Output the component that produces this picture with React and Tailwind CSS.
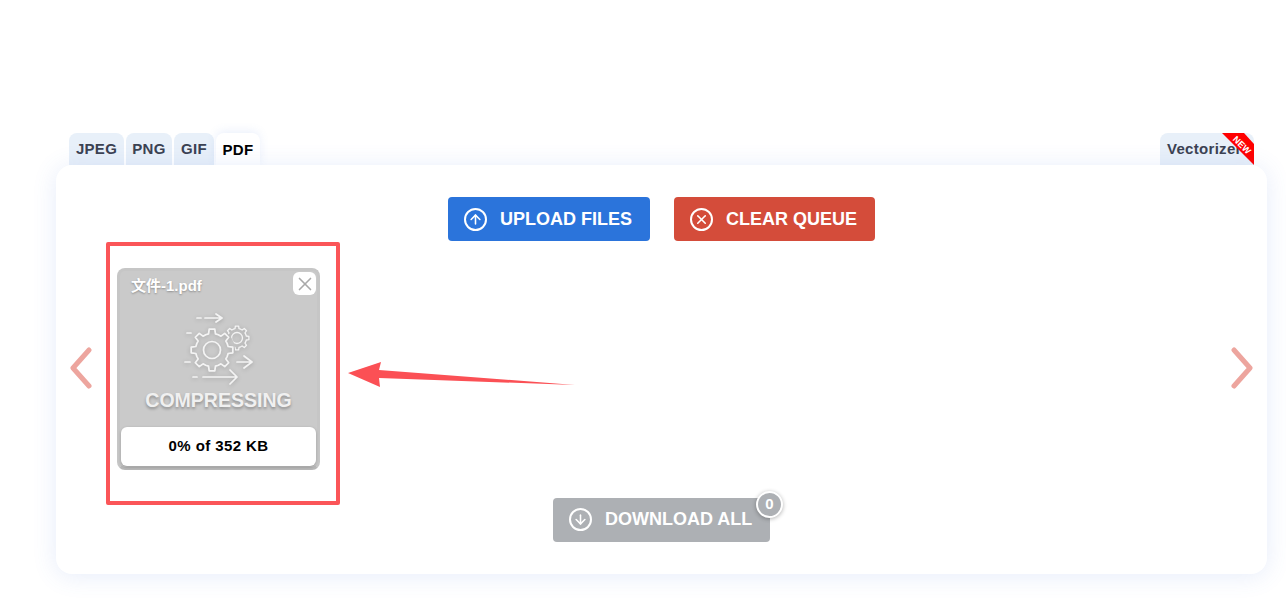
import { ArrowDown, ArrowUp, X } from 'lucide-react';

const font = { fontFamily: '"Liberation Sans", "Noto Sans CJK SC", Arial, sans-serif' };

const tabs = [
  { label: 'JPEG', width: 'w-[55px]' },
  { label: 'PNG', width: 'w-[46px]' },
  { label: 'GIF', width: 'w-[40px]' }
];

function gearPath(cx, cy, outer, inner, teeth) {
  const step = (Math.PI * 2) / teeth;
  const points = [];
  for (let i = 0; i < teeth; i += 1) {
    const a = i * step - Math.PI / 2;
    [
      [a - step * 0.5, inner],
      [a - step * 0.27, inner],
      [a - step * 0.17, outer],
      [a + step * 0.17, outer],
      [a + step * 0.27, inner]
    ].forEach(([angle, r]) => {
      points.push(`${(cx + Math.cos(angle) * r).toFixed(2)} ${(cy + Math.sin(angle) * r).toFixed(2)}`);
    });
  }
  return `M${points.join('L')}Z`;
}

function GearIcon() {
  return (
    <svg width="70" height="74" viewBox="0 0 70 74" fill="none" stroke="#f4f4f4" strokeWidth="1.7" strokeLinecap="round" strokeLinejoin="round" className="drop-shadow-[0_1px_2px_rgba(0,0,0,0.2)]">
      <defs>
        <clipPath id="behind-main-gear">
          <path clipRule="evenodd" d="M0 0H70V74H0Z M5 37a23 23 0 1 0 46 0a23 23 0 1 0 -46 0Z" />
        </clipPath>
      </defs>
      <path d={gearPath(28, 37, 21, 16.5, 8)} />
      <circle cx="28" cy="37" r="8.5" />
      <g clipPath="url(#behind-main-gear)">
        <path d={gearPath(53, 25, 12, 9.5, 8)} strokeWidth="1.3" />
        <circle cx="53" cy="25" r="5.5" strokeWidth="1.3" />
      </g>
      <path d="M13 5 h4 M21 5 h16 M32 1 L38 5 L32 9" />
      <path d="M3 20 h4" />
      <path d="M1 49 h5 M53 49 h14 M60 43 L68 49 L60 55" />
      <path d="M9 64 h4 M19 64 h34 M46 57 L53 64 L46 71" />
    </svg>
  );
}

function Chevron({ flip = false }) {
  return (
    <svg width="24" height="42" viewBox="0 0 24 42" fill="none" stroke="#eda59e" strokeWidth="5" strokeLinecap="round" strokeLinejoin="round" className={flip ? 'mt-[79px] shrink-0 -scale-x-100' : 'mt-[79px] shrink-0'}>
      <path d="M19 3 L3 21 L19 39" />
    </svg>
  );
}

export default function App() {
  return (
    <div className="relative h-[614px] w-[1286px] overflow-hidden bg-white pl-[56px] pt-[133px]" style={font}>
      <div className="flex h-[32px] w-[1211px] justify-between pl-[13px] pr-[13px]">
        <div className="flex gap-[2px]">
          {tabs.map((tab) => (
            <div key={tab.label} className={`${tab.width} flex h-[32px] items-center justify-center rounded-t-lg bg-[#e8f0f9] pt-[1px] text-[15px] font-bold tracking-[0.3px] text-[#3b4252]`}>
              {tab.label}
            </div>
          ))}
          <div className="flex h-[33px] w-[44px] items-center justify-center rounded-t-lg bg-white pt-[1px] text-[15px] font-bold tracking-[0.3px] text-black shadow-[0_-2px_10px_rgba(90,130,220,0.12)]">
            PDF
          </div>
        </div>
        <div className="relative flex h-[32px] w-[94px] items-center overflow-hidden rounded-t-lg bg-[#e8f0f9] pl-[7px] pt-[1px] text-[15px] font-bold tracking-[0.3px] text-[#3b4252]">
          Vectorizer
          <svg width="94" height="32" viewBox="0 0 94 32" className="absolute left-0 top-0">
            <path d="M62 0 H84 L94 11 V32 Z" fill="#ff0000" />
          </svg>
          <span className="absolute left-[71px] top-[8px] rotate-45 text-[9px] font-bold leading-[9px] tracking-normal text-white">NEW</span>
        </div>
      </div>

      <div className="relative z-10 flex h-[409px] w-[1211px] flex-col items-center rounded-2xl bg-white pt-[32px] shadow-[0_2px_24px_rgba(80,120,220,0.14)]">
        <div className="flex gap-[24px]">
          <button className="flex h-[44px] w-[202px] items-center gap-[13px] rounded bg-[#2b74db] pl-[16px] text-[18px] font-bold text-white">
            <span className="flex h-[23px] w-[23px] items-center justify-center rounded-full border-2 border-white">
              <ArrowUp className="h-[15px] w-[15px]" strokeWidth={2.5} />
            </span>
            UPLOAD FILES
          </button>
          <button className="flex h-[44px] w-[201px] items-center gap-[13px] rounded bg-[#d44c3a] pl-[16px] text-[18px] font-bold text-white">
            <span className="flex h-[23px] w-[23px] items-center justify-center rounded-full border-2 border-white">
              <X className="h-[15px] w-[15px]" strokeWidth={2.5} />
            </span>
            CLEAR QUEUE
          </button>
        </div>

        <div className="flex h-[230px] w-full items-start pl-[14px] pr-[14px] pt-[27px]">
          <Chevron />
          <div className="relative ml-[23px] flex h-[202px] w-[203px] shrink-0 flex-col items-center rounded-lg border-[3px] border-[#c6c6c6] border-b-[#b8b8b8] bg-[#cacaca]">
            <div className="absolute right-[1px] top-[1px] flex h-[23px] w-[23px] items-center justify-center rounded-md bg-white">
              <X className="h-[22px] w-[22px] text-[#a9a9a9]" strokeWidth={1.8} />
            </div>
            <div className="mt-[6px] w-full pl-[11px] text-[15px] font-bold leading-[18px] text-white [text-shadow:0_1px_2px_rgba(0,0,0,0.3)]">文件-1.pdf</div>
            <div className="mt-[18px]">
              <GearIcon />
            </div>
            <div className="mt-[2px] text-[19.5px] font-bold leading-[22px] text-[#f0f0f0] [text-shadow:0_2px_3px_rgba(0,0,0,0.3)]">COMPRESSING</div>
            <div className="mt-[16px] flex h-[39px] w-[195px] shrink-0 items-center justify-center rounded-md bg-white text-[15px] font-bold tracking-[0.4px] text-black shadow-[0_1px_3px_rgba(0,0,0,0.25)]">
              0% of 352 KB
            </div>
          </div>
          <div className="flex-1" />
          <Chevron flip />
        </div>

        <div className="relative mt-[27px]">
          <button className="flex h-[44px] w-[217px] items-center gap-[13px] rounded bg-[#adb0b4] pb-[2px] pl-[16px] text-[18px] font-bold text-white">
            <span className="flex h-[23px] w-[23px] items-center justify-center rounded-full border-2 border-white">
              <ArrowDown className="h-[15px] w-[15px]" strokeWidth={2.5} />
            </span>
            DOWNLOAD ALL
          </button>
          <span className="absolute -right-[13px] -top-[7px] flex h-[27px] w-[27px] items-center justify-center rounded-full border-2 border-white bg-[#adb0b4] text-[15px] font-bold text-white shadow-[0_1px_4px_rgba(0,0,0,0.3)]">
            0
          </span>
        </div>
      </div>

      {/* red annotation drawn on top of the screenshot */}
      <div className="absolute left-[106px] top-[242px] z-20 h-[263px] w-[234px] rounded-[2px] border-[4px] border-[#fb5558]" />
      <svg width="240" height="40" viewBox="0 0 240 40" className="absolute left-[340px] top-[355px] z-20">
        <path d="M8 18 L41 7 L39 15 L235 30 L39 23 L40 32 Z" fill="#fb5055" />
      </svg>
    </div>
  );
}
